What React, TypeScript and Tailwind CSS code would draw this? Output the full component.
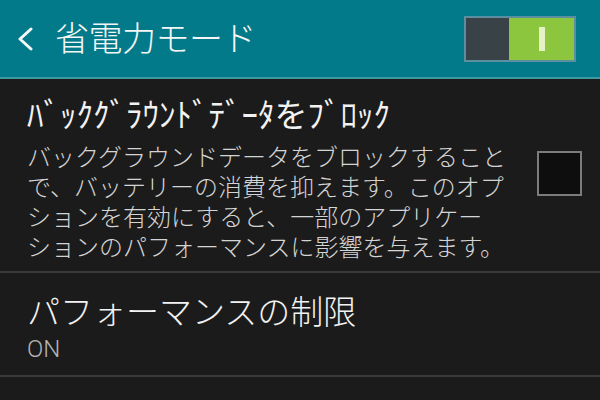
export default function App() {
  const font = { fontFamily: '"Noto Sans CJK JP", "Noto Sans", sans-serif' }
  const desc = [
    'バックグラウンドデータをブロックすること',
    'で、バッテリーの消費を抑えます。このオプ',
    'ションを有効にすると、一部のアプリケー',
    'ションのパフォーマンスに影響を与えます。',
  ]
  return (
    <div className="w-[600px] h-[400px] overflow-hidden bg-[#1b1b1b] flex flex-col" style={font}>
      {/* header */}
      <div className="h-[79px] shrink-0 bg-[#037a89] border-b-2 border-[#3c9aa5] flex items-center pl-[16px] pr-[24px]">
        <svg width="20" height="24" viewBox="0 0 20 24" className="shrink-0">
          <path d="M15 2 L4 12 L15 22" fill="none" stroke="#f4f8f8" strokeWidth="3" strokeLinecap="round" strokeLinejoin="round" />
        </svg>
        <h1 className="ml-[19px] text-[34px] leading-none font-light text-[#f4f6f6] tracking-[-0.5px] mt-[-4px]">省電力モード</h1>
        <div className="ml-auto flex w-[112px] h-[46px] border-2 border-[#5a8ea0]">
          <div className="w-[43px] bg-[#394247]" />
          <div className="flex-1 bg-[#8cc63e] flex items-center justify-center">
            <div className="w-[6px] h-[24px] bg-[#e4f2c6]" />
          </div>
        </div>
      </div>

      {/* background data */}
      <div className="flex items-center border-b-2 border-[#3a3a3a] pl-[27px] pr-[18px] pt-[14px] pb-[10px]">
        <div className="flex-1">
          <p className="text-[33px] leading-[40px] text-[#f2f2f2]">ﾊﾞｯｸｸﾞﾗｳﾝﾄﾞﾃﾞｰﾀをﾌﾞﾛｯｸ</p>
          <div className="mt-[8px] text-[24px] leading-[30px] font-light text-[#d4d4d4] whitespace-nowrap">
            {desc.map((line) => (
              <p key={line}>{line}</p>
            ))}
          </div>
        </div>
        <div className="w-[45px] h-[45px] border-2 border-[#7c7c7c] bg-[#0e0e0e] shrink-0 mt-[-8px]" />
      </div>

      {/* performance */}
      <div className="border-b-2 border-[#3a3a3a] pl-[27px] pt-[17px] pb-[12px]">
        <p className="text-[33px] leading-[40px] font-light text-[#f2f2f2]">パフォーマンスの制限</p>
        <p className="mt-[5px] text-[24px] leading-[28px] font-light text-[#b4b4b4]" style={{ fontFamily: 'Roboto, sans-serif' }}>ON</p>
      </div>
    </div>
  )
}
